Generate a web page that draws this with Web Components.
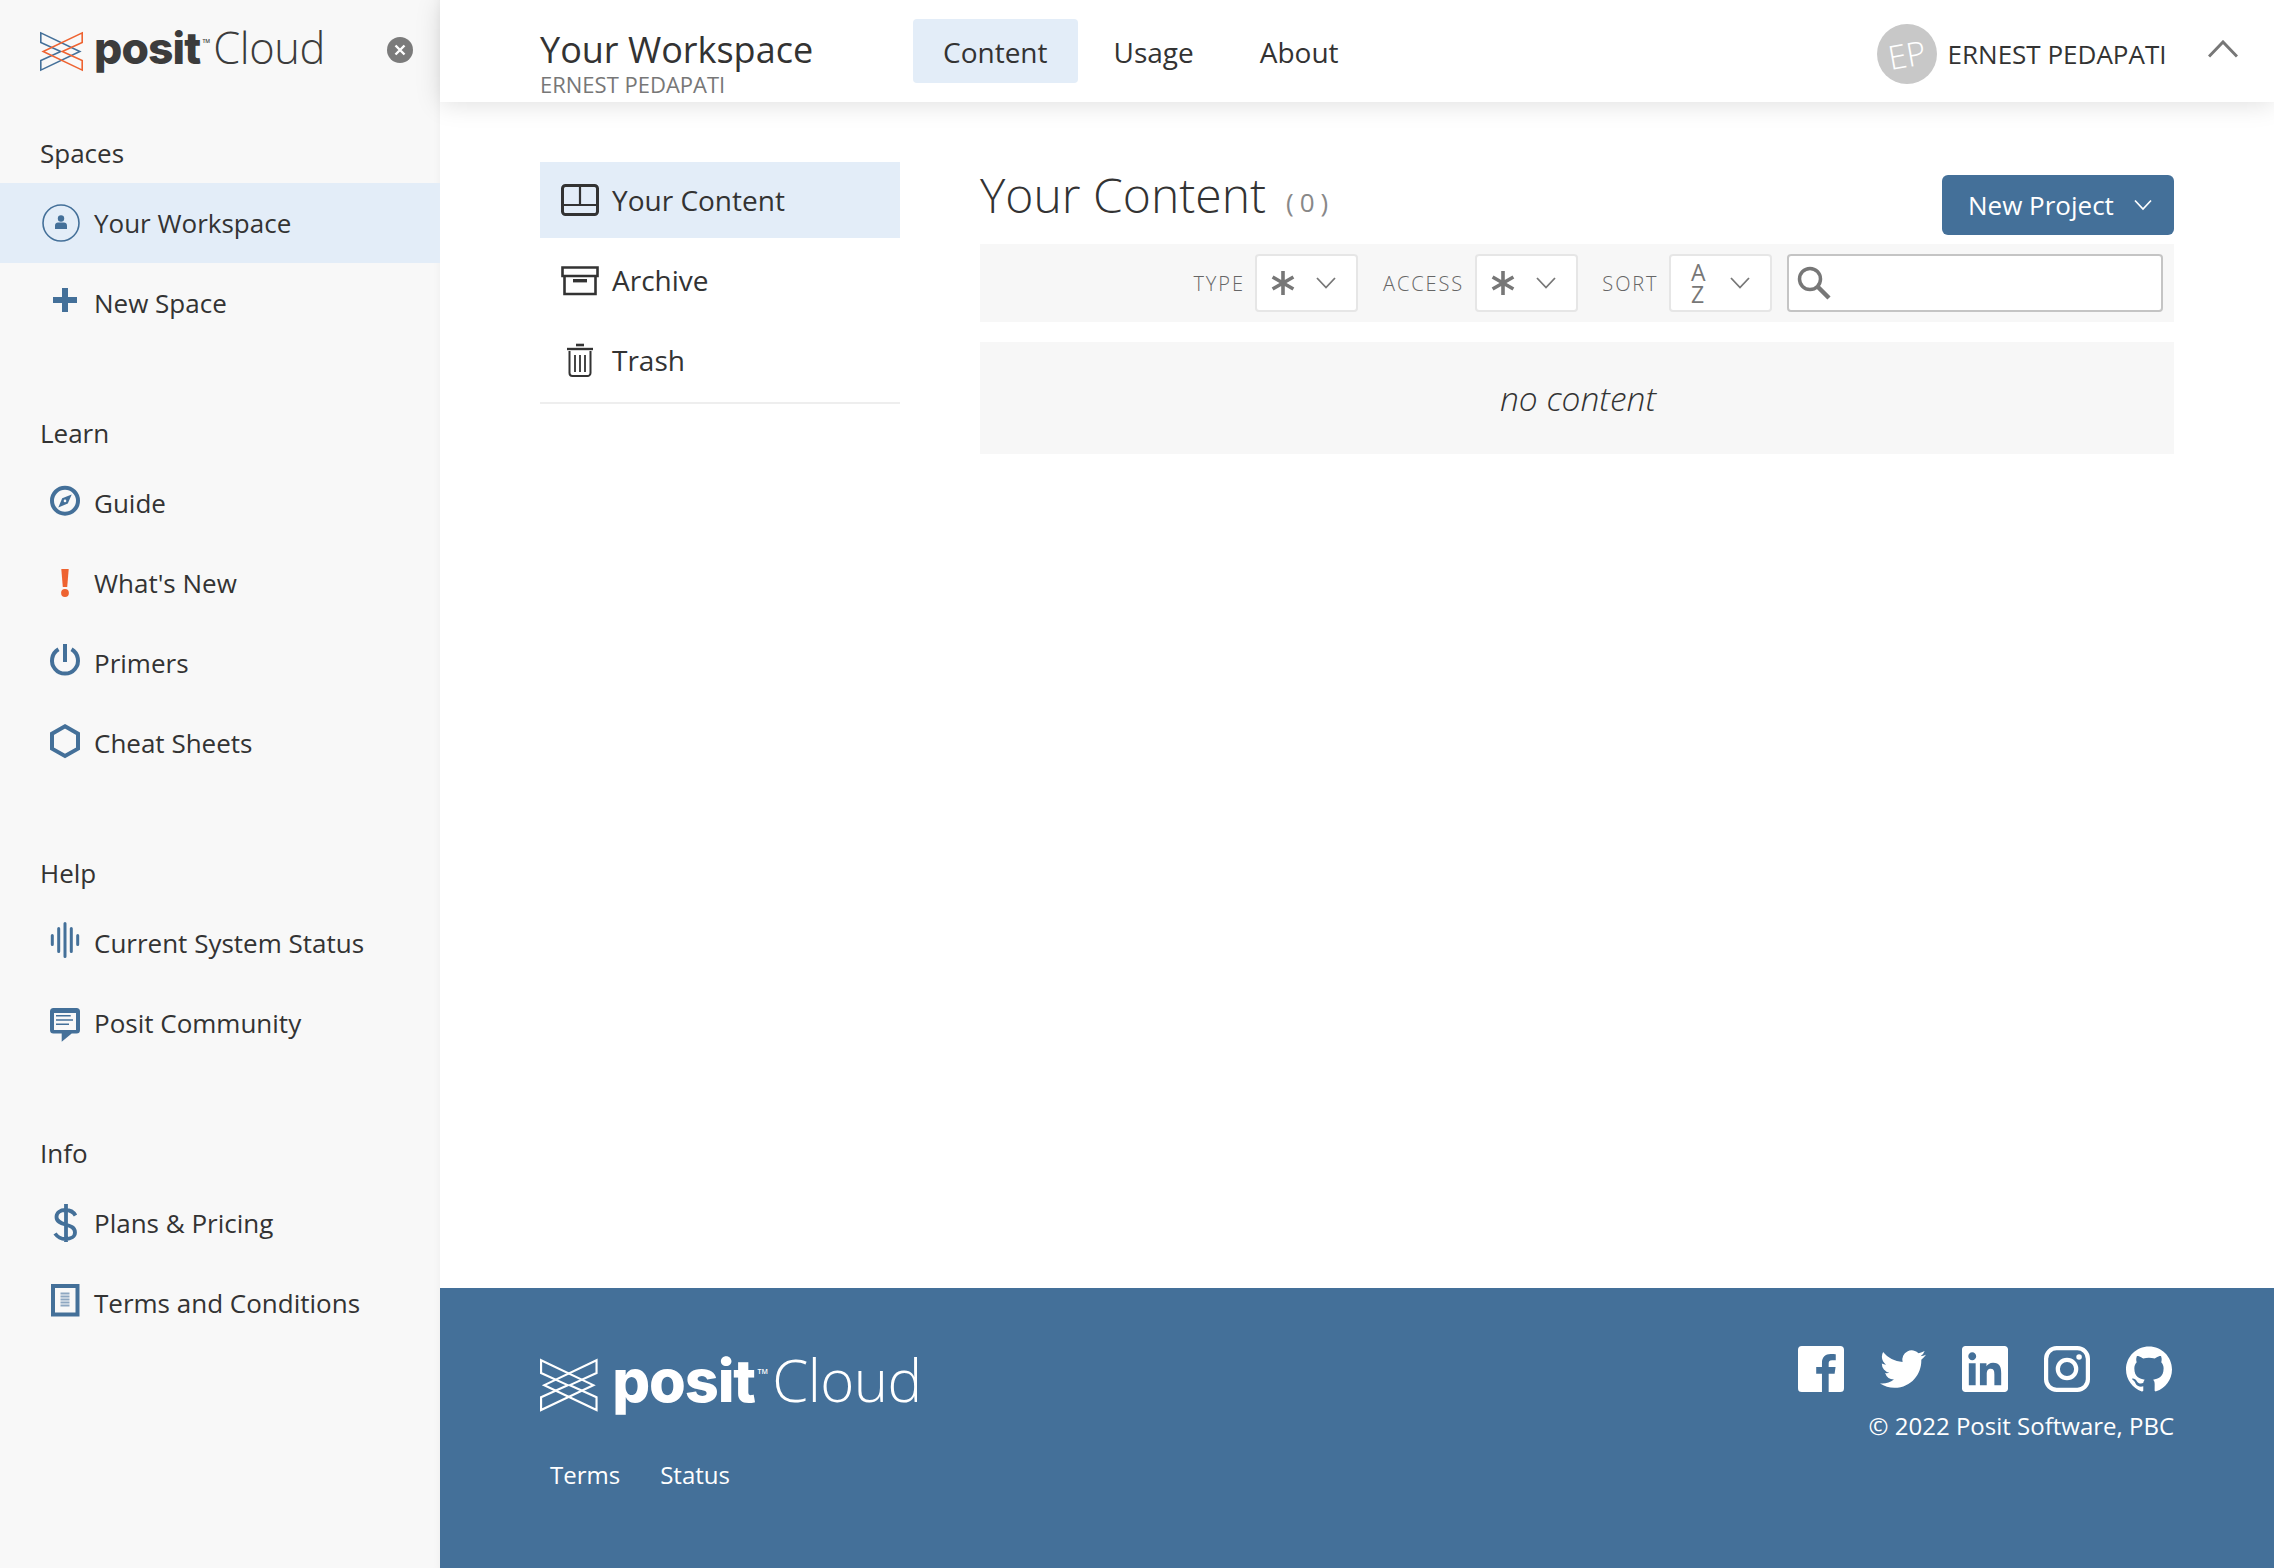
<!DOCTYPE html>
<html lang="en">
<head>
<meta charset="utf-8">
<title>Your Workspace - Posit Cloud</title>
<style>
	html, body { margin: 0; height: 100%; }
	body {
		font-family: "Open Sans", "Liberation Sans", sans-serif;
		font-size: 26px;
		color: #333;
		background: #fff;
	}
</style>
</head>
<body>
<ps-app>
	<ps-sidebar slot="sidebar">
		<ps-section label="Spaces">
			<ps-link icon="person" active>Your Workspace</ps-link>
			<ps-link icon="plus">New Space</ps-link>
		</ps-section>
		<ps-section label="Learn">
			<ps-link icon="compass">Guide</ps-link>
			<ps-link icon="bang">What's New</ps-link>
			<ps-link icon="power">Primers</ps-link>
			<ps-link icon="hexagon">Cheat Sheets</ps-link>
		</ps-section>
		<ps-section label="Help">
			<ps-link icon="status">Current System Status</ps-link>
			<ps-link icon="bubble">Posit Community</ps-link>
		</ps-section>
		<ps-section label="Info">
			<ps-link icon="dollar">Plans &amp; Pricing</ps-link>
			<ps-link icon="page">Terms and Conditions</ps-link>
		</ps-section>
	</ps-sidebar>
	<ps-header slot="header" title-text="Your Workspace" owner="ERNEST PEDAPATI" user="ERNEST PEDAPATI" initials="EP">
		<ps-tab active>Content</ps-tab>
		<ps-tab>Usage</ps-tab>
		<ps-tab>About</ps-tab>
	</ps-header>
	<ps-content>
		<ps-content-nav slot="nav">
			<ps-nav-item icon="grid" active>Your Content</ps-nav-item>
			<ps-nav-item icon="archive">Archive</ps-nav-item>
			<ps-nav-item icon="trash">Trash</ps-nav-item>
		</ps-content-nav>
		<ps-toolbar>
			<ps-select label="TYPE" value="star"></ps-select>
			<ps-select label="ACCESS" value="star"></ps-select>
			<ps-select label="SORT" value="az"></ps-select>
			<ps-search></ps-search>
		</ps-toolbar>
	</ps-content>
	<ps-footer slot="footer"></ps-footer>
</ps-app>

<script>
// Icon bodies. Sidebar ones share a 50x50 box whose centre is the middle of the row
const BLUE = '#447099';
const ICONS = {
	person: `<circle cx="21" cy="25" r="18" fill="none" stroke="${ BLUE }" stroke-width="1.6"/><circle cx="21" cy="20.5" r="3.2" fill="${ BLUE }"/><path d="M15 31v-3.5c0-2 1.4-3 3-3h6c1.600 0 3 1 3 3V31z" fill="${ BLUE }"/>`,
	plus: `<path d="M22 10h6v9h9v6h-9v9h-6v-9h-9v-6h9z" fill="${ BLUE }"/>`,
	compass: `<circle cx="25" cy="22.700" r="13" fill="none" stroke="${ BLUE }" stroke-width="4"/><path d="M31.700 16.500 27.800 25.600 18.300 29.400 22.200 20.300z" fill="${ BLUE }"/><circle cx="25" cy="22.900" r="1.300" fill="#f8f8f8"/>`,
	bang: `<path d="M21.300 11h7.400l-1.500 18h-4.400z" fill="#ee6331"/><circle cx="25" cy="35" r="3.900" fill="#ee6331"/>`,
	power: `<path d="M18.500 11.300a13 13 0 1 0 13 0" fill="none" stroke="${ BLUE }" stroke-width="4"/><path d="M25 6v18" stroke="${ BLUE }" stroke-width="4"/>`,
	hexagon: `<path d="M25 8.300 38 15.700v15L25 38 12 30.700v-15z" fill="none" stroke="${ BLUE }" stroke-width="4"/>`,
	status: `<g stroke="${ BLUE }" stroke-width="3" stroke-linecap="round"><path d="M12.300 17.500v9M18.700 10.500v23M25 5.500v33M31.300 10.500v23M37.700 17.500v9"/></g>`,
	bubble: `<path d="M13.500 10h23a3.500 3.500 0 0 1 3.500 3.500v18.500a3.500 3.500 0 0 1-3.500 3.500H31.700l-10 8.200v-8.200h-8.200a3.500 3.500 0 0 1-3.500-3.500V13.500a3.500 3.500 0 0 1 3.500-3.500z" fill="${ BLUE }"/><rect x="14" y="15" width="22" height="17" fill="#f8f8f8"/><path d="M16 17.700h14.700M16 22h17M16 26.200h13" stroke="${ BLUE }" stroke-width="1.500"/>`,
	dollar: `<path d="M35.500 17.500C33.500 14 30 12 25.500 12c-5.500 0-9 3-9 7 0 4.500 4 6 9 7.500s9.500 3 9.500 8c0 4-4 6.500-9.500 6.500-4.500 0-8-2-10.500-5.500M26 6v38" fill="none" stroke="${ BLUE }" stroke-width="3.800"/>`,
	page: `<rect x="13" y="8" width="24.500" height="28.500" fill="#f8f8f8" stroke="${ BLUE }" stroke-width="4"/><path d="M20.500 15.500h9M20.500 18.500h9M20.500 21.500h9M20.500 24.500h9M20.500 27.500h9" stroke="#8ea7c1" stroke-width="1.800"/>`,
	grid: `<rect x="1.500" y="2.500" width="35" height="29" rx="3" fill="none" stroke="#333" stroke-width="3"/><path d="M2 22h34M19 3v19" stroke="#333" stroke-width="2.200"/>`,
	archive: `<path d="M1.500 4.500h35v8.500h-35zM3.500 13v18h31V13" fill="none" stroke="#333" stroke-width="2.600"/><rect x="12" y="16" width="14" height="3.400" fill="#333"/>`,
	trash: `<path d="M6 6h26" stroke="#333" stroke-width="2.400"/><path d="M15 2h8" stroke="#333" stroke-width="2.600"/><path d="M8.500 8v22a3 3 0 0 0 3 3h15a3 3 0 0 0 3-3V8" fill="none" stroke="#333" stroke-width="2"/><path d="M14 12v17M19 12v17M24 12v17" stroke="#333" stroke-width="1.800"/>`
};
const SOCIAL = {
	facebook: '<path d="M22 0H2a2 2 0 0 0-2 2v20a2 2 0 0 0 2 2h10.500v-9.500H9.500V11h3V8.800c0-3 1.800-4.600 4.500-4.600 1.300 0 2.400.1 2.700.1v3.100h-1.900c-1.500 0-1.800.7-1.800 1.800V11h3.600l-.5 3.500h-3.100V24H22a2 2 0 0 0 2-2V2a2 2 0 0 0-2-2z"/>',
	twitter: '<path d="M23.953 4.570a10 10 0 01-2.825.775 4.958 4.958 0 002.163-2.723c-.951.555-2.005.959-3.127 1.184a4.920 4.920 0 00-8.384 4.482C7.690 8.095 4.067 6.130 1.640 3.162a4.822 4.822 0 00-.666 2.475c0 1.710.870 3.213 2.188 4.096a4.904 4.904 0 01-2.228-.616v.060a4.923 4.923 0 003.946 4.827 4.996 4.996 0 01-2.212.085 4.936 4.936 0 004.604 3.417 9.867 9.867 0 01-6.102 2.105c-.390 0-.779-.023-1.170-.067a13.995 13.995 0 007.557 2.209c9.053 0 13.998-7.496 13.998-13.985 0-.210 0-.420-.015-.630A9.935 9.935 0 0024 4.590z"/>',
	linkedin: '<path d="M20.447 20.452h-3.554v-5.569c0-1.328-.027-3.037-1.852-3.037-1.853 0-2.136 1.445-2.136 2.939v5.667H9.351V9h3.414v1.561h.046c.477-.9 1.637-1.850 3.370-1.850 3.601 0 4.267 2.370 4.267 5.455v6.286zM5.337 7.433c-1.144 0-2.063-.926-2.063-2.065 0-1.138.92-2.063 2.063-2.063 1.140 0 2.064.925 2.064 2.063 0 1.139-.925 2.065-2.064 2.065zm1.782 13.019H3.555V9h3.564v11.452zM22.225 0H1.771C.792 0 0 .774 0 1.729v20.542C0 23.227.792 24 1.771 24h20.451C23.200 24 24 23.227 24 22.271V1.729C24 .774 23.200 0 22.222 0h.003z"/>',
	instagram: '<rect x="1.100" y="1.100" width="21.800" height="21.800" rx="5.500" fill="none" stroke="#fff" stroke-width="2.200"/><circle cx="12" cy="12" r="4.800" fill="none" stroke="#fff" stroke-width="2.200"/><circle cx="18.300" cy="5.700" r="1.450"/>',
	github: '<path d="M12 .297c-6.630 0-12 5.373-12 12 0 5.303 3.438 9.800 8.205 11.385.6.113.82-.258.82-.577 0-.285-.01-1.040-.015-2.040-3.338.724-4.042-1.610-4.042-1.610C4.422 18.070 3.633 17.700 3.633 17.700c-1.087-.744.084-.729.084-.729 1.205.084 1.838 1.236 1.838 1.236 1.070 1.835 2.809 1.305 3.495.998.108-.776.417-1.305.76-1.605-2.665-.3-5.466-1.332-5.466-5.930 0-1.310.465-2.380 1.235-3.220-.135-.303-.54-1.523.105-3.176 0 0 1.005-.322 3.300 1.230.96-.267 1.980-.399 3-.405 1.020.006 2.040.138 3 .405 2.280-1.552 3.285-1.230 3.285-1.230.645 1.653.24 2.873.12 3.176.765.84 1.230 1.910 1.230 3.220 0 4.610-2.805 5.625-5.475 5.920.42.36.81 1.096.81 2.220 0 1.606-.015 2.896-.015 3.286 0 .315.21.69.825.57C20.565 22.092 24 17.592 24 12.297c0-6.627-5.373-12-12-12"/>'
};

// Small helper, every element here only needs an open root with fixed markup
class PsElement extends HTMLElement {
	render ( html ) {
		this.attachShadow( { mode: 'open' } );
		this.shadowRoot.innerHTML = html;
	}
}

class PsApp extends PsElement {
	constructor () {
		super();
		this.render( `
			<style>
				:host { display: grid; grid-template-columns: 440px 1fr; grid-template-rows: 102px 1fr 280px; min-height: 100vh; }
				.side { grid-row: 1 / 4; display: flex; }
				.top { grid-column: 2; position: relative; z-index: 2; display: flex; }
				.middle { grid-column: 2; display: flex; }
				.bottom { grid-column: 2; display: flex; }
				::slotted( * ) { flex: 1; }
			</style>
			<div class="side"><slot name="sidebar"></slot></div>
			<div class="top"><slot name="header"></slot></div>
			<div class="middle"><slot></slot></div>
			<div class="bottom"><slot name="footer"></slot></div>
		` );
	}
}

class PsLogo extends PsElement {
	constructor () {
		super();
		this.render( `
			<style>
				:host { display: inline-flex; align-items: center; font-size: 40px; color: #3c3c3c; --blue: ${ BLUE }; --orange: #ee6331; }
				:host( [light] ) { font-size: 53.600px; color: #fff; --blue: #fff; --orange: #fff; }
				svg { width: 1.075em; height: .975em; margin-right: .275em; flex: none; overflow: visible; }
				.name { display: flex; align-items: baseline; line-height: 1; margin-bottom: .18em; }
				.posit { font-family: Inter, "Open Sans", sans-serif; font-size: 1.11em; font-weight: 800; letter-spacing: -.02em; }
				.tm { font-size: .13em; font-weight: 600; width: 2.500em; padding-left: .4em; box-sizing: border-box; align-self: flex-start; margin-top: 2.600em; }
				.cloud { font-weight: 300; font-size: 1.085em; letter-spacing: -.01em; }
			</style>
			<svg viewBox="0 0 43 39" fill="none" stroke-width="1.600">
				<path d="M.8.9 39.800 19.500.8 38.100v-9.600L20.700 19.500.8 10.500z" stroke="var(--blue)"/>
				<path d="M42.200.9 3.200 19.500l39 18.600v-9.600L22.300 19.500l19.900-9z" stroke="var(--orange)"/>
			</svg>
			<span class="name"><span class="posit">posit</span><span class="tm">TM</span><span class="cloud">Cloud</span></span>
		` );
	}
}

class PsSidebar extends PsElement {
	constructor () {
		super();
		this.render( `
			<style>
				:host { display: flex; flex-direction: column; width: 440px; box-sizing: border-box; background: #f8f8f8; box-shadow: inset -8px 0 8px -8px rgba( 0, 0, 0, .05 ); gap: 60px; }
				.brand { display: flex; align-items: center; justify-content: space-between; height: 123px; margin-bottom: -60px; padding: 0 27px 20px 40px; box-sizing: border-box; }
				.close { width: 26px; height: 26px; flex: none; margin-bottom: 3px; }
			</style>
			<div class="brand">
				<ps-logo></ps-logo>
				<svg class="close" viewBox="0 0 26 26"><circle cx="13" cy="13" r="13" fill="#7b7b7b"/><path d="M8.500 8.500l9 9M17.500 8.500l-9 9" stroke="#fff" stroke-width="2.400"/></svg>
			</div>
			<slot></slot>
		` );
	}
}

class PsSection extends PsElement {
	constructor () {
		super();
		this.render( `
			<style>
				:host { display: block; }
				.label { height: 60px; line-height: 60px; padding-left: 40px; }
			</style>
			<div class="label">${ this.getAttribute( 'label' ) }</div>
			<slot></slot>
		` );
	}
}

class PsLink extends PsElement {
	constructor () {
		super();
		this.render( `
			<style>
				:host { display: flex; align-items: center; height: 80px; padding-left: 40px; }
				:host( [active] ) { background: #e3edf8; }
				svg { width: 50px; height: 50px; margin-right: 4px; flex: none; }
			</style>
			<svg viewBox="0 0 50 50">${ ICONS[ this.getAttribute( 'icon' ) ] }</svg>
			<span><slot></slot></span>
		` );
	}
}

class PsHeader extends PsElement {
	constructor () {
		super();
		this.render( `
			<style>
				:host { display: flex; align-items: center; height: 102px; padding: 0 36px 0 100px; background: #fff; box-shadow: 0 2px 24px rgba( 0, 0, 0, .13 ); }
				.heading { width: 373px; flex: none; display: flex; flex-direction: column; align-self: flex-start; padding-top: 28px; }
				h1 { margin: 0; font-size: 36px; font-weight: 400; line-height: 44px; }
				small { font-size: 22px; color: #777; line-height: 24px; }
				nav { display: flex; gap: 6px; align-self: flex-start; margin-top: 19px; }
				.user { margin-left: auto; display: flex; align-items: center; }
				.avatar { width: 60px; height: 60px; border-radius: 50%; background: #c8c8c8; color: #fff; display: flex; align-items: center; justify-content: center; font-size: 33px; font-weight: 300; margin-right: 11px; margin-top: 6px; }
				.avatar span { transform: rotate( -10deg ); }
				.name { margin-top: 6px; }
				.toggle { width: 30px; height: 18px; margin-left: 41.500px; margin-bottom: 5px; }
			</style>
			<div class="heading">
				<h1>${ this.getAttribute( 'title-text' ) }</h1>
				<small>${ this.getAttribute( 'owner' ) }</small>
			</div>
			<nav><slot></slot></nav>
			<div class="user">
				<div class="avatar"><span>${ this.getAttribute( 'initials' ) }</span></div>
				<div class="name">${ this.getAttribute( 'user' ) }</div>
				<svg class="toggle" viewBox="0 0 30 18"><path d="M1 16.500 15 2l14 14.500" fill="none" stroke="#777" stroke-width="3"/></svg>
			</div>
		` );
	}
}

class PsTab extends PsElement {
	constructor () {
		super();
		this.render( `
			<style>
				:host { display: block; height: 64px; line-height: 66px; padding: 0 30px; border-radius: 4px; font-size: 28px; }
				:host( [active] ) { background: #e3edf8; }
			</style>
			<slot></slot>
		` );
	}
}

class PsContent extends PsElement {
	constructor () {
		super();
		this.render( `
			<style>
				:host { display: flex; gap: 80px; padding: 60px 100px 0; box-sizing: border-box; background: #fff; }
				.main { flex: 1; min-width: 0; }
				.title { display: flex; align-items: flex-start; height: 82px; }
				h2 { margin: 0; font-size: 48px; font-weight: 300; line-height: 64px; margin-top: 1px; }
				.count { font-size: 26px; letter-spacing: 6px; color: #888; margin: 15px 0 0 20px; line-height: 50px; }
				.empty { margin-top: 20px; height: 112px; line-height: 112px; background: #f7f7f7; text-align: center; font-style: italic; font-weight: 300; font-size: 33.500px; padding-left: 2px; }
				.button { display: flex; align-items: center; height: 60px; margin: 13px 0 0 auto; padding: 0 22px 0 26px; box-sizing: border-box; width: 232px; justify-content: space-between; background: ${ BLUE }; color: #fff; border-radius: 6px; }
				.button svg { width: 18px; height: 12px; }
			</style>
			<slot name="nav"></slot>
			<div class="main">
				<div class="title">
					<h2>Your Content</h2>
					<span class="count">(0)</span>
					<div class="button">New Project <svg viewBox="0 0 18 12"><path d="M1 1.500 9 10l8-8.500" fill="none" stroke="#fff" stroke-width="1.700"/></svg></div>
				</div>
				<slot></slot>
				<div class="empty">no content</div>
			</div>
		` );
	}
}

class PsContentNav extends PsElement {
	constructor () {
		super();
		this.render( `
			<style>
				:host { display: flex; flex-direction: column; gap: 4px; width: 360px; height: 240px; flex: none; border-bottom: 2px solid #eee; }
			</style>
			<slot></slot>
		` );
	}
}

class PsNavItem extends PsElement {
	constructor () {
		super();
		this.render( `
			<style>
				:host { display: flex; align-items: center; height: 76px; padding-left: 21px; font-size: 28px; flex: none; }
				:host( [active] ) { background: #e3edf8; }
				svg { width: 38px; height: 34px; margin-right: 13px; flex: none; }
			</style>
			<svg viewBox="0 0 38 34">${ ICONS[ this.getAttribute( 'icon' ) ] }</svg>
			<span><slot></slot></span>
		` );
	}
}

class PsToolbar extends PsElement {
	constructor () {
		super();
		this.render( `
			<style>
				:host { display: flex; align-items: center; justify-content: flex-end; height: 78px; padding-right: 11px; background: #f7f7f7; }
			</style>
			<slot></slot>
		` );
	}
}

class PsSelect extends PsElement {
	constructor () {
		super();
		const star = '<svg class="star" viewBox="0 0 24 24"><path d="M12 0v24M1.600 6l20.800 12M22.400 6 1.600 18" stroke="#777" stroke-width="3.600"/></svg>';
		const az = '<span class="az">A<br>Z</span>';
		this.render( `
			<style>
				:host { display: flex; align-items: center; margin-right: 24.700px; }
				:host( :last-of-type ) { margin-right: 15px; }
				label { font-size: 20px; font-weight: 300; letter-spacing: 1.900px; font-kerning: none; color: #666; margin-right: 10.500px; }
				.box { display: flex; align-items: center; width: 103px; height: 58px; box-sizing: border-box; background: #fff; border: 2px solid #e6e6e6; border-radius: 4px; padding: 0 20px 0 14px; justify-content: space-between; }
				.star { width: 24px; height: 24px; }
				.az { font-size: 23px; line-height: 22px; color: #777; margin-left: 6px; }
				.chevron { width: 20px; height: 12px; }
			</style>
			<label>${ this.getAttribute( 'label' ) }</label>
			<div class="box">
				${ this.getAttribute( 'value' ) === 'az' ? az : star }
				<svg class="chevron" viewBox="0 0 20 12"><path d="M1 1 10 10.500 19 1" fill="none" stroke="#777" stroke-width="1.800"/></svg>
			</div>
		` );
	}
}

class PsSearch extends PsElement {
	constructor () {
		super();
		this.render( `
			<style>
				:host { display: flex; align-items: center; width: 376px; height: 58px; box-sizing: border-box; background: #fff; border: 2px solid #c4c4c4; border-radius: 4px; padding-left: 8px; }
				svg { width: 34px; height: 34px; }
			</style>
			<svg viewBox="0 0 34 34"><circle cx="13" cy="13" r="10.500" fill="none" stroke="#777" stroke-width="3.500"/><path d="M20.500 20.500 32 32" stroke="#777" stroke-width="4.500"/></svg>
		` );
	}
}

class PsFooter extends PsElement {
	constructor () {
		super();
		const icons = [ 'facebook', 'twitter', 'linkedin', 'instagram', 'github' ]
			.map( ( name ) => `<svg viewBox="0 0 24 24">${ SOCIAL[ name ] }</svg>` )
			.join( '' );
		this.render( `
			<style>
				:host { display: flex; justify-content: space-between; padding: 58px 100px 0; box-sizing: border-box; background: ${ BLUE }; color: #fff; font-size: 24px; }
				ps-logo { margin-top: 5px; }
				.links { display: flex; gap: 40px; margin: 38px 0 0 10px; }
				.right { display: flex; flex-direction: column; align-items: flex-end; }
				.social { display: flex; gap: 36px; fill: #fff; margin-right: 2px; }
				.social svg { width: 46px; height: 46px; }
				.copy { margin-top: 17px; }
			</style>
			<div>
				<ps-logo light></ps-logo>
				<div class="links"><span>Terms</span><span>Status</span></div>
			</div>
			<div class="right">
				<div class="social">${ icons }</div>
				<div class="copy">© 2022 Posit Software, PBC</div>
			</div>
		` );
	}
}

customElements.define( 'ps-app', PsApp );
customElements.define( 'ps-logo', PsLogo );
customElements.define( 'ps-sidebar', PsSidebar );
customElements.define( 'ps-section', PsSection );
customElements.define( 'ps-link', PsLink );
customElements.define( 'ps-header', PsHeader );
customElements.define( 'ps-tab', PsTab );
customElements.define( 'ps-content', PsContent );
customElements.define( 'ps-content-nav', PsContentNav );
customElements.define( 'ps-nav-item', PsNavItem );
customElements.define( 'ps-toolbar', PsToolbar );
customElements.define( 'ps-select', PsSelect );
customElements.define( 'ps-search', PsSearch );
customElements.define( 'ps-footer', PsFooter );
</script>
</body>
</html>
